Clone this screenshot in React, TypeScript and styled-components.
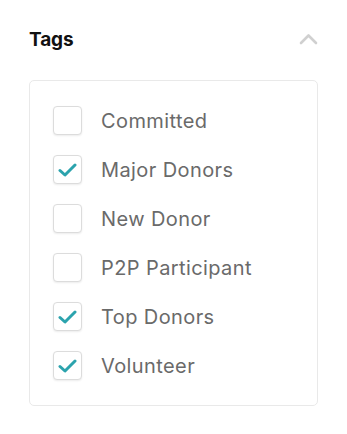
import styled, { createGlobalStyle } from 'styled-components'

const GlobalStyle = createGlobalStyle`
  body {
    margin: 0;
    background: #ffffff;
    font-family: Inter, "Open Sans", sans-serif;
  }
`

const Panel = styled.div`
  width: 289px;
  padding: 24px 29px 0 29px;
`

const Header = styled.div`
  display: flex;
  align-items: center;
  justify-content: space-between;
  height: 30px;
`

const Title = styled.h2`
  margin: 0;
  font-size: 19px;
  font-weight: 700;
  color: #111111;
  letter-spacing: -0.1px;
`

const Toggle = styled.button`
  border: none;
  background: none;
  padding: 0;
  width: 19px;
  height: 12px;
  display: flex;
  cursor: pointer;
`

const TagBox = styled.div`
  margin-top: 26px;
  border: 1px solid #e9e9e9;
  border-radius: 5px;
  padding: 25px 23px 25px 23px;
  display: flex;
  flex-direction: column;
  gap: 20px;
`

const Row = styled.label`
  display: flex;
  align-items: center;
  gap: 19px;
  cursor: pointer;
`

const Box = styled.span<{ $checked: boolean }>`
  width: 29px;
  height: 29px;
  box-sizing: border-box;
  border: 1px solid #dcdcdc;
  border-radius: 4px;
  box-shadow: 0 1px 2px rgba(0, 0, 0, 0.08);
  display: flex;
  align-items: center;
  justify-content: center;
  background: #fff;
  flex-shrink: 0;
`

const Label = styled.span`
  font-size: 20px;
  color: #6a6a6a;
  letter-spacing: 0.4px;
`

const tags = [
  { name: 'Committed', checked: false },
  { name: 'Major Donors', checked: true },
  { name: 'New Donor', checked: false },
  { name: 'P2P Participant', checked: false },
  { name: 'Top Donors', checked: true },
  { name: 'Volunteer', checked: true },
]

export default function App() {
  return (
    <>
      <GlobalStyle />
      <Panel>
        <Header>
          <Title>Tags</Title>
          <Toggle aria-label="collapse">
            <svg width="19" height="12" viewBox="0 0 19 12">
              <path d="M2 10 L9.5 2.5 L17 10" fill="none" stroke="#d0d0d0" strokeWidth="2.6" strokeLinecap="round" strokeLinejoin="round" />
            </svg>
          </Toggle>
        </Header>
        <TagBox>
          {tags.map((t) => (
            <Row key={t.name}>
              <Box $checked={t.checked}>
                {t.checked ? (
                  <svg width="19" height="14" viewBox="0 0 19 14">
                    <path d="M2 7.5 L7 12 L17 2" fill="none" stroke="#2ba3ad" strokeWidth="3" strokeLinecap="round" strokeLinejoin="round" />
                  </svg>
                ) : null}
              </Box>
              <Label>{t.name}</Label>
            </Row>
          ))}
        </TagBox>
      </Panel>
    </>
  )
}
